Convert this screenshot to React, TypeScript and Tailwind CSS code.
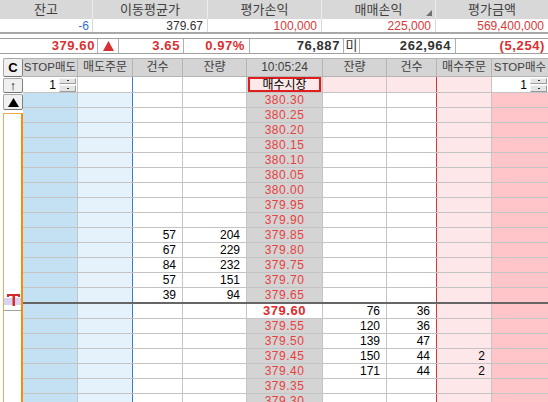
import React from 'react';

type Row = {
  price: string;
  sCnt?: string;
  sQty?: string;
  bQty?: string;
  bCnt?: string;
  bOrd?: string;
  cur?: boolean;
  sep?: boolean;
};

const ROWS: Row[] = [
  { price: '380.30' },
  { price: '380.25' },
  { price: '380.20' },
  { price: '380.15' },
  { price: '380.10' },
  { price: '380.05' },
  { price: '380.00' },
  { price: '379.95' },
  { price: '379.90' },
  { price: '379.85', sCnt: '57', sQty: '204' },
  { price: '379.80', sCnt: '67', sQty: '229' },
  { price: '379.75', sCnt: '84', sQty: '232' },
  { price: '379.70', sCnt: '57', sQty: '151' },
  { price: '379.65', sCnt: '39', sQty: '94', sep: true },
  { price: '379.60', bQty: '76', bCnt: '36', cur: true },
  { price: '379.55', bQty: '120', bCnt: '36' },
  { price: '379.50', bQty: '139', bCnt: '47' },
  { price: '379.45', bQty: '150', bCnt: '44', bOrd: '2' },
  { price: '379.40', bQty: '171', bCnt: '44', bOrd: '2' },
  { price: '379.35' },
  { price: '379.30' },
];

function Spin() {
  return (
    <div className="flex flex-col w-[17px] h-[14px] gap-[1px] ml-[3px]">
      <div className="flex-1 bg-[#e4e4e4] border border-[#9c9c9c] border-t-[#f4f4f4] border-l-[#f4f4f4] flex items-center justify-center">
        <span className="w-[2px] h-[1px] bg-[#303030]" />
      </div>
      <div className="flex-1 bg-[#e4e4e4] border border-[#9c9c9c] border-t-[#f4f4f4] border-l-[#f4f4f4] flex items-center justify-center">
        <span className="w-[2px] h-[1px] bg-[#303030]" />
      </div>
    </div>
  );
}

function Btn({ children }: { children: React.ReactNode }) {
  return (
    <div className="w-[20px] h-full bg-[#f0f0f0] border border-[#a8a8a8] border-b-[#707070] border-r-[#808080] rounded-[2px] flex items-center justify-center text-black">
      {children}
    </div>
  );
}

function PriceRow({ r }: { r: Row }) {
  const line = r.sep ? 'border-b-2 border-[#666666] h-[16px]' : 'border-b border-[#c4c4c4] h-[15px]';
  return (
    <div className={`flex ${line}`}>
      <div className="w-[55px] shrink-0 bg-[#c4e1f3] border-r border-[#c4c4c4]" />
      <div className="w-[55px] shrink-0 bg-[#e5f1fb] border-r border-[#3a7bd5]" />
      <div className="w-[50px] shrink-0 bg-white border-r border-[#c4c4c4] text-right pr-[6px] leading-[14px]">{r.sCnt}</div>
      <div className="w-[64px] shrink-0 bg-white border-r border-[#c4c4c4] text-right pr-[6px] leading-[14px]">{r.sQty}</div>
      {r.cur ? (
        <div className="w-[76px] shrink-0 bg-white border-r border-[#c4c4c4] text-center leading-[14px] font-bold text-[13px] text-[#e02a2a] tracking-[0.5px]">{r.price}</div>
      ) : (
        <div className="w-[76px] shrink-0 bg-[#d4d4d4] border-r border-[#c4c4c4] text-center leading-[14px] text-[#e8403f] tracking-[0.5px]">{r.price}</div>
      )}
      <div className="w-[64px] shrink-0 bg-white border-r border-[#c4c4c4] text-right pr-[6px] leading-[14px]">{r.bQty}</div>
      <div className="w-[50px] shrink-0 bg-white border-r border-[#c8383f] text-right pr-[6px] leading-[14px]">{r.bCnt}</div>
      <div className="w-[55px] shrink-0 bg-[#fde7e9] border-r border-[#c4c4c4] text-right pr-[6px] leading-[14px]">{r.bOrd}</div>
      <div className="w-[56px] shrink-0 bg-[#ffc5c8]" />
    </div>
  );
}

export default function App() {
  return (
    <div className="w-[548px] h-[402px] overflow-hidden bg-white font-['Liberation_Sans','Noto_Sans_CJK_KR',sans-serif] text-[12px] text-black select-none">
      {/* 잔고 요약 */}
      <div className="flex h-[19px] bg-[#d8d8d8] text-[#404040] text-[13px] leading-[19px]">
        <div className="w-[93px] text-center border-r border-[#ececec]">잔고</div>
        <div className="w-[115px] text-center border-r border-[#ececec]">이동평균가</div>
        <div className="w-[114px] text-center border-r border-[#ececec]">평가손익</div>
        <div className="relative w-[114px] text-center border-r border-[#ececec]">
          매매손익
          <svg className="absolute right-[3px] bottom-[3px]" width="6" height="6" viewBox="0 0 6 6">
            <polygon points="6,0 6,6 0,6" fill="#707070" />
          </svg>
        </div>
        <div className="w-[112px] text-center">평가금액</div>
      </div>
      <div className="flex h-[15px] border-b-2 border-[#a8a8a8] leading-[14px]">
        <div className="w-[93px] text-right pr-[3px] border-r border-[#d8d8d8] text-[#2f6fd6]">-6</div>
        <div className="w-[115px] text-right pr-[4px] border-r border-[#d8d8d8] text-[#333333]">379.67</div>
        <div className="w-[114px] text-right pr-[4px] border-r border-[#d8d8d8] text-[#d83838]">100,000</div>
        <div className="w-[114px] text-right pr-[4px] border-r border-[#d8d8d8] text-[#d83838]">225,000</div>
        <div className="w-[112px] text-right pr-[4px] text-[#d83838]">569,400,000</div>
      </div>
      <div className="h-[4px]" />
      <div className="flex h-[16px] border-y border-[#a0a0a0] font-bold text-[13px] leading-[14px] tracking-[0.6px]">
        <div className="w-[98px] text-right pr-[2px] border-r border-[#b0b0b0] text-[#d83030]">379.60</div>
        <div className="w-[21px] border-r border-[#b0b0b0] flex items-center justify-center">
          <svg width="11" height="10" viewBox="0 0 11 10">
            <polygon points="5.5,0 11,10 0,10" fill="#d83030" />
          </svg>
        </div>
        <div className="w-[65px] text-right pr-[3px] border-r border-[#b0b0b0] text-[#d83030]">3.65</div>
        <div className="w-[66px] text-right pr-[4px] border-r border-[#b0b0b0] text-[#d83030]">0.97%</div>
        <div className="w-[94px] text-right pr-[3px] border-r border-[#b0b0b0] text-[#333333]">76,887</div>
        <div className="w-[16px] text-center border-r border-[#b0b0b0] text-[#333333] font-normal tracking-normal">미</div>
        <div className="w-[96px] text-right pr-[4px] border-r border-[#b0b0b0] text-[#333333]">262,964</div>
        <div className="w-[92px] text-right pr-[3px] text-[#d83030]">(5,254)</div>
      </div>
      <div className="h-[4px]" />

      {/* 호가창 */}
      <div className="flex">
        <div className="w-[23px] shrink-0 flex flex-col pl-[3px] bg-white">
          <div className="h-[19px]">
            <Btn><span className="font-bold text-[13px] leading-none">C</span></Btn>
          </div>
          <div className="h-[15px] mt-[1px]">
            <Btn><span className="text-[13px] leading-none">↑</span></Btn>
          </div>
          <div className="h-[16px] mt-[1px]">
            <Btn>
              <svg width="11" height="9" viewBox="0 0 11 9">
                <polygon points="5.5,0 11,9 0,9" fill="#000000" />
              </svg>
            </Btn>
          </div>
          <div className="mt-[3px] w-[20px] h-[300px] border-l border-t border-[#f5a850] border-r-2 border-r-[#ff8a00] flex flex-col">
            <div className="h-[176px]" />
            <div className="h-[15px] flex flex-col justify-end">
              <div className="relative h-[7px] bg-[#d9d2f0]">
                <svg className="absolute left-[3px] bottom-[-1px]" width="13" height="13" viewBox="0 0 13 13">
                  <path d="M1 4 V2 H12 V4" fill="none" stroke="#d42a2a" strokeWidth="2" />
                  <rect x="5.5" y="2" width="2.5" height="11" fill="#d42a2a" />
                </svg>
              </div>
            </div>
            <div className="h-[6px] border-b border-[#a0a0a0]" />
          </div>
        </div>

        <div className="flex-1 flex flex-col">
          <div className="flex h-[19px] bg-[#d4d4d4] border-y border-[#b4b4b4] text-[#404040] leading-[17px]">
            <div className="w-[55px] shrink-0 text-center border-r border-[#b4b4b4] text-[11.5px]">STOP매도</div>
            <div className="w-[55px] shrink-0 text-center border-r border-[#b4b4b4]">매도주문</div>
            <div className="w-[50px] shrink-0 text-center border-r border-[#b4b4b4]">건수</div>
            <div className="w-[64px] shrink-0 text-center border-r border-[#b4b4b4]">잔량</div>
            <div className="w-[76px] shrink-0 text-center border-r border-[#b4b4b4]">10:05:24</div>
            <div className="w-[64px] shrink-0 text-center border-r border-[#b4b4b4]">잔량</div>
            <div className="w-[50px] shrink-0 text-center border-r border-[#b4b4b4]">건수</div>
            <div className="w-[55px] shrink-0 text-center border-r border-[#b4b4b4]">매수주문</div>
            <div className="w-[56px] shrink-0 text-center text-[11.5px]">STOP매수</div>
          </div>

          <div className="flex h-[16px] border-b border-[#c4c4c4]">
            <div className="w-[55px] shrink-0 bg-white border-r border-[#c4c4c4] flex items-center justify-end pr-[1px] leading-none">
              <span>1</span>
              <Spin />
            </div>
            <div className="w-[55px] shrink-0 bg-white border-r border-[#3a7bd5]" />
            <div className="w-[50px] shrink-0 bg-white border-r border-[#c4c4c4]" />
            <div className="w-[64px] shrink-0 bg-white border-r border-[#c4c4c4]" />
            <div className="w-[76px] shrink-0 bg-[#d4d4d4] border-r border-[#c4c4c4] px-[1px]">
              <div className="h-full border-2 border-[#e01e1e] bg-[#fde8ea] flex items-center justify-center text-[12px] leading-none">매수시장</div>
            </div>
            <div className="w-[64px] shrink-0 bg-[#fde7e9] border-r border-[#c4c4c4]" />
            <div className="w-[50px] shrink-0 bg-[#fde7e9] border-r border-[#c8383f]" />
            <div className="w-[55px] shrink-0 bg-[#fde7e9] border-r border-[#c4c4c4]" />
            <div className="w-[56px] shrink-0 bg-white flex items-center justify-end pr-[1px] leading-none">
              <span>1</span>
              <Spin />
            </div>
          </div>

          {ROWS.map(r => (
            <PriceRow key={r.price} r={r} />
          ))}
        </div>
      </div>
    </div>
  );
}
